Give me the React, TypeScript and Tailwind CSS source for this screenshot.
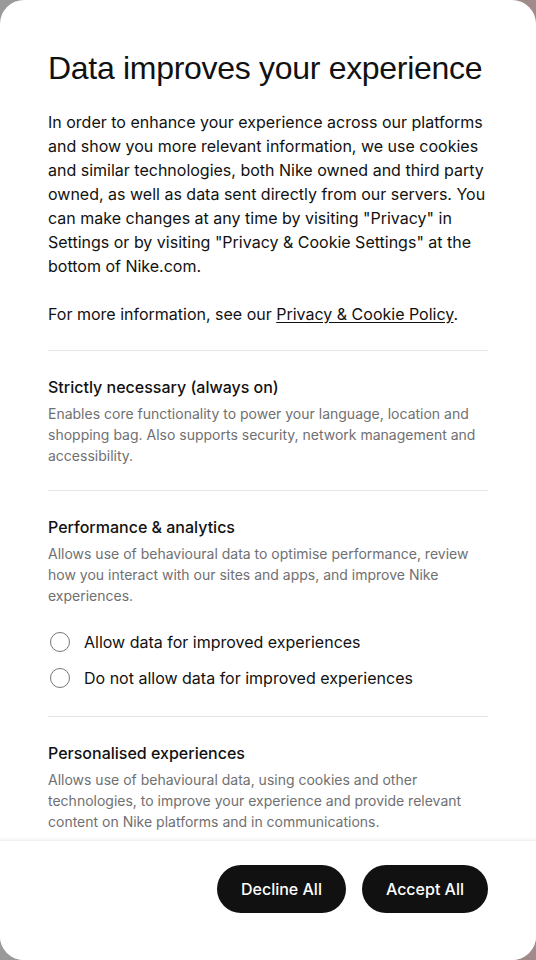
import React from "react";

const sections = [
  {
    title: "Strictly necessary (always on)",
    body: "Enables core functionality to power your language, location and shopping bag. Also supports security, network management and accessibility.",
    options: [] as string[],
  },
  {
    title: "Performance & analytics",
    body: "Allows use of behavioural data to optimise performance, review how you interact with our sites and apps, and improve Nike experiences.",
    options: ["Allow data for improved experiences", "Do not allow data for improved experiences"],
  },
  {
    title: "Personalised experiences",
    body: "Allows use of behavioural data, using cookies and other technologies, to improve your experience and provide relevant content on Nike platforms and in communications.",
    options: [],
  },
];

function Radio({ label }: { label: string }) {
  return (
    <label className="flex items-center gap-3 h-7">
      <span className="w-6 h-6 flex items-center justify-center">
        <span className="w-5 h-5 rounded-full border-[1.5px] border-[#767676] bg-white" />
      </span>
      <span className="text-[16px] leading-6 text-[#111111]">{label}</span>
    </label>
  );
}

export default function App() {
  return (
    <div className="h-[960px] w-[536px] bg-gradient-to-r from-[#9a9a9a] to-[#a08a8a]" style={{ fontFamily: "Inter, 'Liberation Sans', sans-serif" }}>
      <div className="h-full bg-white rounded-[24px] overflow-hidden flex flex-col">
        <div className="flex-1 overflow-hidden px-12 pt-12">
          <h1 className="text-[32px] leading-[40px] text-[#111111] tracking-[-0.3px] mb-[22px] font-['Liberation_Sans',sans-serif] whitespace-nowrap">Data improves your experience</h1>
          <p className="text-[16px] leading-6 text-[#111111]">
            In order to enhance your experience across our platforms and show you more relevant information, we use cookies and similar technologies, both Nike owned and third party owned, as well as data sent directly from our servers. You can make changes at any time by visiting "Privacy" in Settings or by visiting "Privacy &amp; Cookie Settings" at the bottom of Nike.com.
          </p>
          <p className="text-[16px] leading-6 text-[#111111] mt-6">
            For more information, see our <span className="underline underline-offset-2">Privacy &amp; Cookie Policy</span>.
          </p>
          {sections.map((s) => (
            <div key={s.title} className="border-t border-[#e5e5e5] mt-6 pt-6">
              <h2 className="text-[16px] leading-6 font-medium text-[#111111]">{s.title}</h2>
              <p className="text-[14px] leading-[21px] text-[#707072] mt-1">{s.body}</p>
              {s.options.length > 0 && (
                <div className="mt-[22px] flex flex-col gap-2">
                  {s.options.map((o) => (
                    <Radio key={o} label={o} />
                  ))}
                </div>
              )}
            </div>
          ))}
        </div>
        <div className="h-[120px] shrink-0 bg-white shadow-[0_-1px_3px_rgba(0,0,0,0.06)] border-t border-[#f2f2f2] flex items-start justify-end gap-4 px-12 pt-6">
          <button className="h-12 px-6 rounded-full bg-[#111111] text-white text-[16px] font-medium">Decline All</button>
          <button className="h-12 px-6 rounded-full bg-[#111111] text-white text-[16px] font-medium">Accept All</button>
        </div>
      </div>
    </div>
  );
}
